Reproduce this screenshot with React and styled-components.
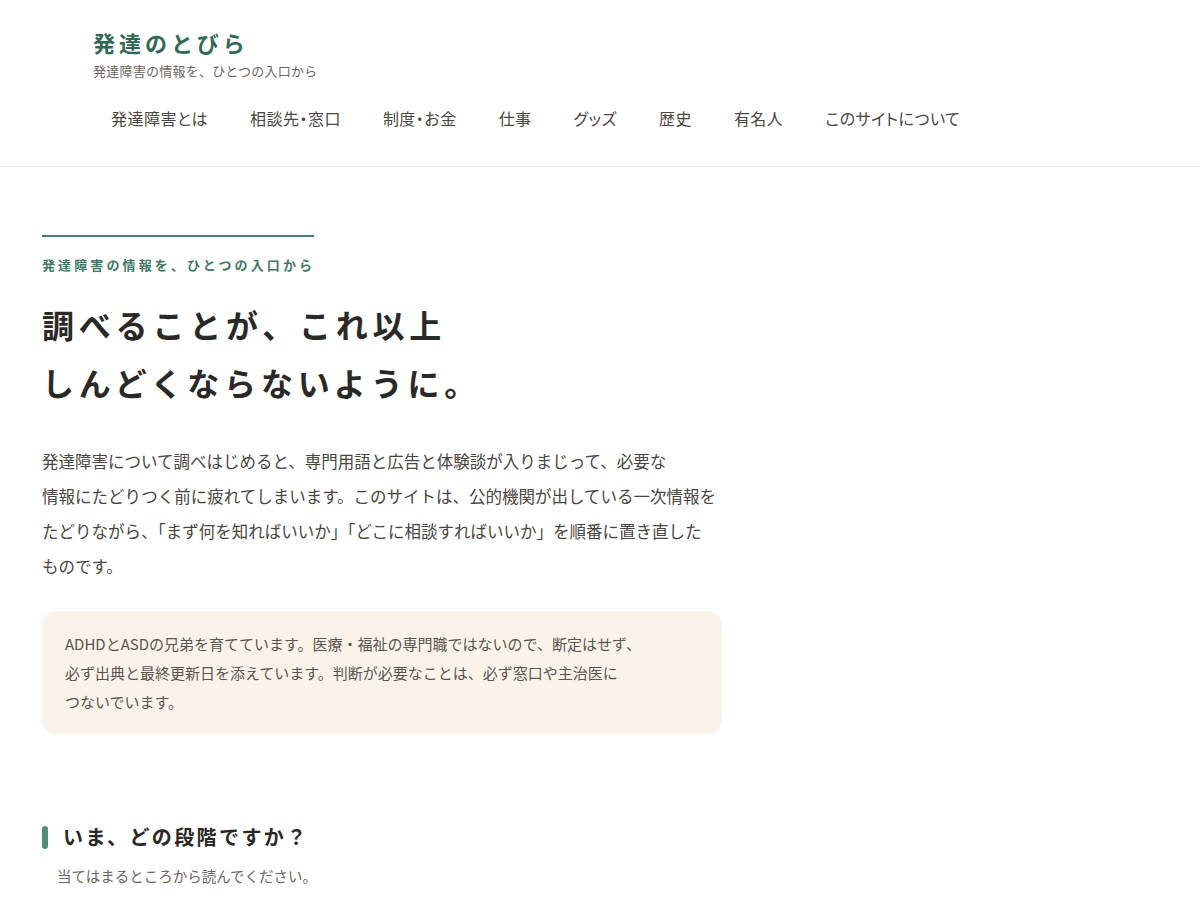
import React from "react"
import styled, { createGlobalStyle } from "styled-components"

const GlobalStyle = createGlobalStyle`
  * { box-sizing: border-box; }
  body {
    margin: 0;
    background: #fff;
    font-family: "Noto Sans CJK JP", "Noto Sans", sans-serif;
    color: #4a4540;
  }
`

const navItems = [
  "発達障害とは",
  "相談先・窓口",
  "制度・お金",
  "仕事",
  "グッズ",
  "歴史",
  "有名人",
  "このサイトについて",
]

const App = () => {
  return (
    <>
      <GlobalStyle />
      <Header>
        <HeaderInner>
          <Logo>発達のとびら</Logo>
          <Tagline>発達障害の情報を、ひとつの入口から</Tagline>
          <Nav>
            {navItems.map((item) => (
              <NavLink key={item} href="#">
                {item}
              </NavLink>
            ))}
          </Nav>
        </HeaderInner>
      </Header>
      <Main>
        <Hero>
          <Rule />
          <Eyebrow>発達障害の情報を、ひとつの入口から</Eyebrow>
          <Title>
            調べることが、これ以上
            <br />
            しんどくならないように。
          </Title>
          <Lead>
            発達障害について調べはじめると、専門用語と広告と体験談が入りまじって、必要な
            <br />
            情報にたどりつく前に疲れてしまいます。このサイトは、公的機関が出している一次情報を
            <br />
            たどりながら、「まず何を知ればいいか」「どこに相談すればいいか」を順番に置き直した
            <br />
            ものです。
          </Lead>
          <Note>
            ADHDとASDの兄弟を育てています。医療・福祉の専門職ではないので、断定はせず、
            <br />
            必ず出典と最終更新日を添えています。判断が必要なことは、必ず窓口や主治医に
            <br />
            つないでいます。
          </Note>
        </Hero>
        <Section>
          <SectionTitle>いま、どの段階ですか？</SectionTitle>
          <SectionLead>当てはまるところから読んでください。</SectionLead>
        </Section>
      </Main>
    </>
  )
}

export default App

const Header = styled.header`
  border-bottom: 1px solid #e6e6e6;
`

const HeaderInner = styled.div`
  padding: 26px 0 0 93px;
  display: flex;
  flex-direction: column;
  align-items: flex-start;
`

const Logo = styled.div`
  font-size: 22px;
  font-weight: 700;
  letter-spacing: 0.18em;
  color: #2f6a55;
  line-height: 32px;
`

const Tagline = styled.div`
  font-size: 13px;
  letter-spacing: 0.02em;
  color: #6b6660;
  line-height: 20px;
  margin-top: 3px;
`

const Nav = styled.nav`
  display: flex;
  margin-top: 17px;
  margin-left: -3px;
`

const NavLink = styled.a`
  display: block;
  padding: 10px 21px 38px;
  font-size: 16px;
  letter-spacing: 0.03em;
  font-feature-settings: "palt";
  color: #4a4540;
  text-decoration: none;
  line-height: 20px;
`

const Main = styled.main`
  padding: 68px 0 40px 42px;
  width: 760px;
`

const Hero = styled.section`
  display: flex;
  flex-direction: column;
  align-items: flex-start;
`

const Rule = styled.div`
  width: 272px;
  height: 2px;
  background: #4a7f70;
`

const Eyebrow = styled.div`
  margin-top: 18px;
  font-size: 13px;
  font-weight: 700;
  letter-spacing: 0.24em;
  color: #3f7866;
  line-height: 20px;
`

const Title = styled.h1`
  margin: 20px 0 0;
  font-size: 32px;
  font-weight: 700;
  letter-spacing: 0.15em;
  line-height: 58px;
  color: #2b2927;
`

const Lead = styled.p`
  margin: 33px 0 0;
  font-size: 16.5px;
  line-height: 35px;
  color: #4a4540;
  white-space: nowrap;
`

const Note = styled.div`
  margin-top: 27px;
  width: 680px;
  background: #fbf3ea;
  border-radius: 14px;
  padding: 18px 23px 18px;
  font-size: 15px;
  line-height: 29px;
  color: #5a544e;
  white-space: nowrap;
`

const Section = styled.section`
  margin-top: 88px;
`

const SectionTitle = styled.h2`
  margin: 0;
  display: flex;
  align-items: center;
  gap: 15px;
  font-size: 20px;
  font-weight: 700;
  letter-spacing: 0.12em;
  line-height: 30px;
  color: #2b2927;
  &::before {
    content: "";
    width: 6px;
    height: 23px;
    border-radius: 3px;
    background: #4f8f7a;
  }
`

const SectionLead = styled.p`
  margin: 12px 0 0 15px;
  font-size: 14.5px;
  line-height: 24px;
  color: #6b6660;
`
